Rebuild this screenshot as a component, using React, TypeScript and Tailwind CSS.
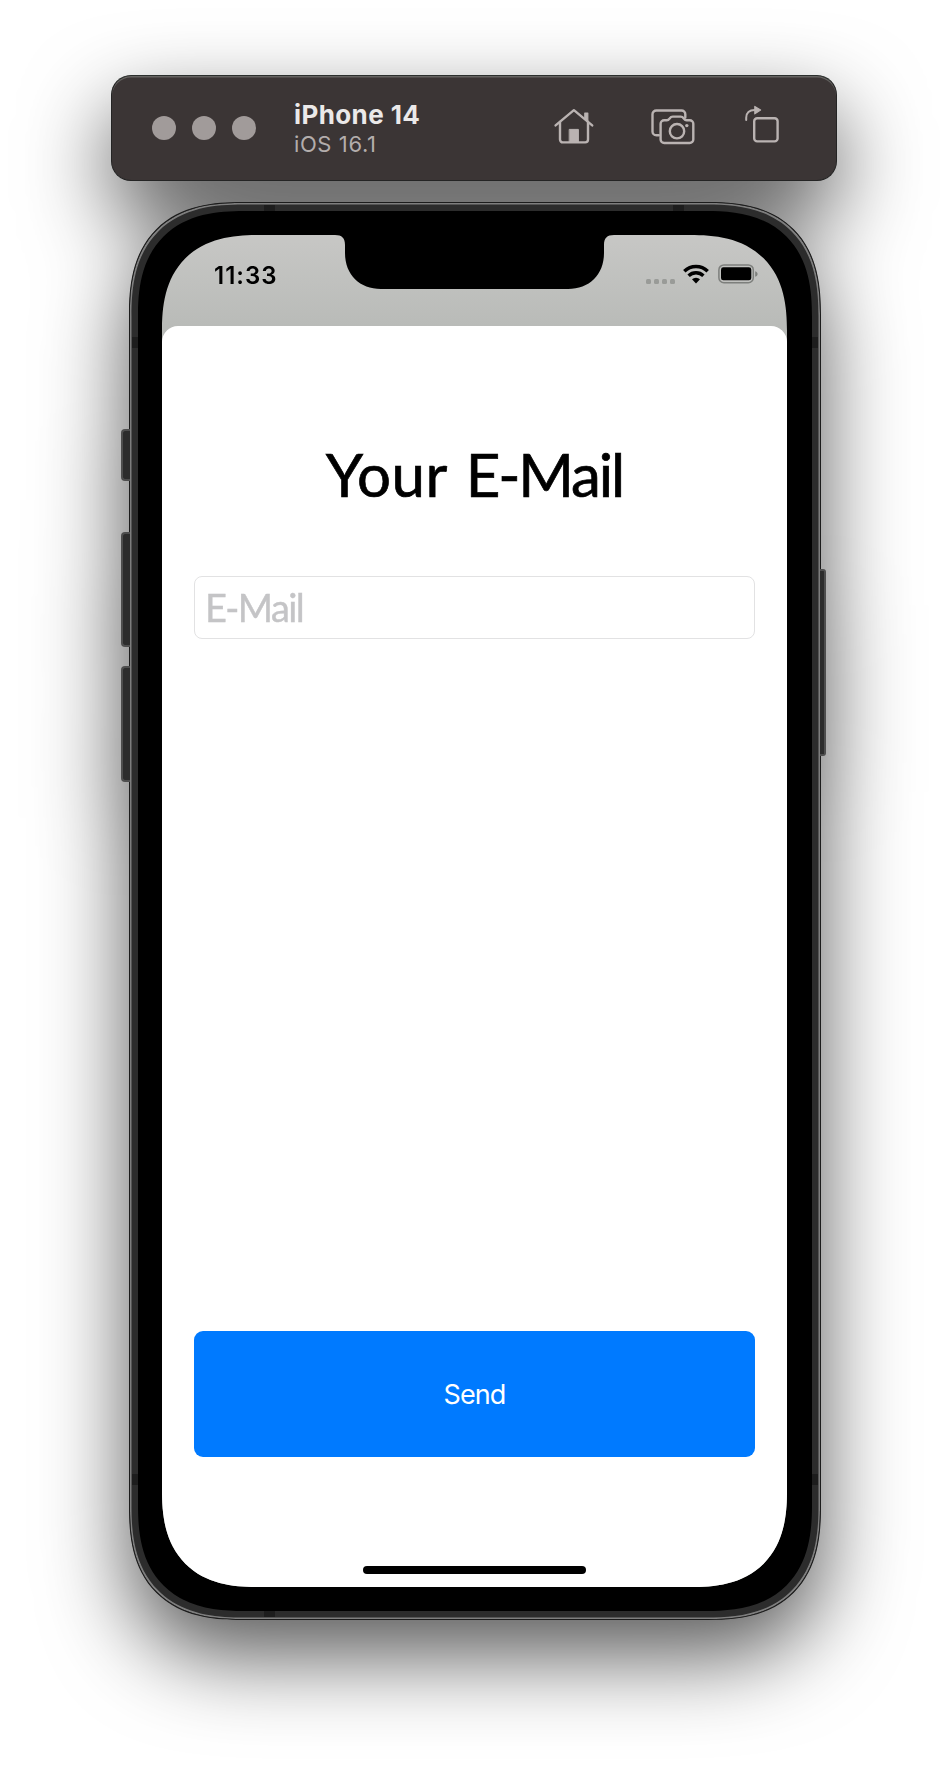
function HomeIcon() {
  return (
    <svg className="h-[36px] w-[40px]" viewBox="0 0 40 36" fill="none" stroke="#bab3b2" strokeWidth="2.400" strokeLinecap="round" strokeLinejoin="round">
      <path d="M1.600 17.400 19.900 2.200 38.200 17.400" />
      <path d="M6 14v17.600a2.800 2.800 0 0 0 2.800 2.800h22.400a2.800 2.800 0 0 0 2.800-2.800V14" />
      <path d="M30.800 5h3v8.600l-3-2.500z" fill="#bab3b2" strokeWidth="1.200" />
      <path d="M15.600 21.400h8.800V34h-8.800z" fill="#bab3b2" strokeWidth="1" />
    </svg>
  );
}

function CameraIcon() {
  return (
    <svg className="h-[36px] w-[44px]" viewBox="0 0 44 36" fill="none" stroke="#bab3b2" strokeWidth="2.400" strokeLinecap="round" strokeLinejoin="round">
      <path d="M7.800 26.200H5.300a3.800 3.800 0 0 1-3.800-3.800V5.300a3.800 3.800 0 0 1 3.800-3.800h25.200a3.800 3.800 0 0 1 3.800 3.800v3.200" />
      <path d="M13.200 11.200h2.600c1.500 0 2-.6 2.800-1.700.9-1.300 1.800-1.900 3.200-1.900h7.800c1.400 0 2.300.6 3.200 1.900.8 1.100 1.300 1.700 2.800 1.700h3.100a3.600 3.600 0 0 1 3.600 3.600v15.600a3.600 3.600 0 0 1-3.600 3.600H13.200a3.600 3.600 0 0 1-3.600-3.600V14.800a3.600 3.600 0 0 1 3.600-3.600z" />
      <circle cx="26" cy="22.200" r="7.200" />
      <circle cx="35.800" cy="16.600" r="1.700" fill="#bab3b2" stroke="none" />
    </svg>
  );
}

function RotateIcon() {
  return (
    <svg className="h-[38px] w-[34px]" viewBox="0 0 34 38" fill="none" stroke="#bab3b2" strokeWidth="2.400" strokeLinecap="round" strokeLinejoin="round">
      <rect x="9.200" y="13.200" width="23.400" height="23.200" rx="3" />
      <path d="M1.200 15v-2.200c0-4.800 3.200-7.800 8.400-7.800" strokeWidth="2" />
      <path d="M9.800 1.400 15.600 5 9.800 8.800z" fill="#bab3b2" strokeWidth="1.200" />
    </svg>
  );
}

function Toolbar() {
  return (
    <header className="ml-[111px] flex h-[106px] w-[726px] items-center rounded-[20px] border border-[#242424] border-t-[#2b2f2d] bg-[#3b3535] pl-[40px] shadow-[inset_0_1.5px_0_#656361]">
      <div className="flex gap-4">
        <span className="size-6 rounded-full bg-[#a19b9a]" />
        <span className="size-6 rounded-full bg-[#a19b9a]" />
        <span className="size-6 rounded-full bg-[#a19b9a]" />
      </div>
      <div className="mt-[2px] ml-[38px] w-[260px]">
        <div className="text-[26px] leading-[30px] font-bold tracking-[0.4px] text-[#ebe9e9]">iPhone 14</div>
        <div className="text-[22px] leading-[28px] tracking-[0.6px] text-[#b3adac]">iOS 16.1</div>
      </div>
      <div className="mb-[4px] flex items-center">
        <HomeIcon />
        <div className="mt-[2px] ml-[57px]"><CameraIcon /></div>
        <div className="mb-[5px] ml-[50px]"><RotateIcon /></div>
      </div>
    </header>
  );
}

function StatusBar() {
  return (
    <div className="relative flex h-[91px] justify-between">
      <svg className="absolute top-0 left-[173px] h-[54px] w-[279px]" viewBox="0 0 279 54">
        <path d="M0 0C7 0 10 3 10 10V18C10 40 25 54 46 54H233C254 54 269 40 269 18V10C269 3 272 0 279 0Z" fill="#000" />
      </svg>
      <span className="mt-[26px] ml-[52px] text-[24px] leading-[30px] font-semibold tracking-[1px] text-black">11:33</span>
      <div className="mt-[27.500px] mr-[29.500px] flex">
        <div className="mt-[16px] mr-[8px] flex gap-[2.700px]">
          <i className="size-[5px] rounded-[1.500px] bg-[#999b98]" />
          <i className="size-[5px] rounded-[1.500px] bg-[#999b98]" />
          <i className="size-[5px] rounded-[1.500px] bg-[#999b98]" />
          <i className="size-[5px] rounded-[1.500px] bg-[#999b98]" />
        </div>
        <svg className="mt-px h-[20px] w-[26px]" viewBox="0 0 26 20" fill="none" stroke="#000" strokeWidth="3.400">
          <path d="M1.300 7.300a16.700 16.700 0 0 1 23.400 0" />
          <path d="M5.600 11.800a10.600 10.600 0 0 1 14.800 0" />
          <path d="M13 19.500 9 15.300a5.800 5.800 0 0 1 8 0z" fill="#000" stroke="none" />
        </svg>
        <svg className="mt-[1.500px] ml-[9px] h-[20px] w-[40px]" viewBox="0 0 40 20">
          <rect x="0.900" y="0.900" width="34.400" height="17.800" rx="5" fill="none" stroke="#7d7f7c" strokeWidth="1.500" />
          <rect x="3" y="3.300" width="30.300" height="13" rx="2.400" fill="#000" />
          <path d="M37.200 7.200c3.200 1 3.200 4.600 0 5.600z" fill="#7d7f7c" />
        </svg>
      </div>
    </div>
  );
}

function EmailSheet() {
  return (
    <main className="flex h-[1261px] flex-col items-center rounded-t-[16px] bg-white">
      <h1 className="mt-[110px] flex h-[77px] gap-[18px] font-['Lato',sans-serif] text-[60px] leading-[76px] whitespace-nowrap text-black [-webkit-text-stroke:0.7px_#000]">
        <span className="tracking-[0.4px]">Your</span>{" "}
        <span className="tracking-[-2.1px]">E-Mail</span>
      </h1>
      <input
        className="mt-[63px] h-[63px] w-[561px] rounded-[8px] border border-[#e2e2e3] bg-white px-[10px] pb-[2px] font-['Lato',sans-serif] text-[38px] tracking-[-1.6px] text-black outline-none placeholder:text-[#c4c4c6] placeholder:opacity-100 placeholder:[-webkit-text-stroke:0.4px_#c4c4c6]"
        type="email"
        placeholder="E-Mail"
      />
      <button className="mt-[692px] h-[126px] w-[561px] rounded-[9px] bg-[#007aff] pt-[2px] text-[27px] tracking-[-0.9px] text-white">Send</button>
      <div className="mt-[109px] h-[8px] w-[223px] rounded-full bg-black" />
    </main>
  );
}

function Phone() {
  return (
    <section className="relative mt-[21px] ml-[129px] h-[1418px] w-[692px] rounded-[110px] border border-[#1c1c1c] bg-[#2c2c2c] shadow-[inset_0_0_0_1.5px_#7e7e7e] supports-[corner-shape:squircle]:rounded-[113px] supports-[corner-shape:squircle]:[corner-shape:superellipse(1.33)]">
      <i className="absolute top-[226px] left-[-9px] h-[52px] w-[9px] rounded-l-[4px] border-2 border-r-0 border-[#4e4e4e] bg-[#2c2c2c]" />
      <i className="absolute top-[329px] left-[-9px] h-[115px] w-[9px] rounded-l-[4px] border-2 border-r-0 border-[#4e4e4e] bg-[#2c2c2c]" />
      <i className="absolute top-[463px] left-[-9px] h-[116px] w-[9px] rounded-l-[4px] border-2 border-r-0 border-[#4e4e4e] bg-[#2c2c2c]" />
      <i className="absolute top-[366px] left-[690px] h-[187px] w-[6px] rounded-r-[3px] border-2 border-l-0 border-[#4e4e4e] bg-[#2c2c2c]" />
      <i className="absolute top-[2px] left-[134px] h-[7px] w-[11px] bg-[#1d1d1d]" />
      <i className="absolute top-[2px] left-[543px] h-[7px] w-[11px] bg-[#1d1d1d]" />
      <i className="absolute bottom-[2px] left-[134px] h-[7px] w-[11px] bg-[#1d1d1d]" />
      <i className="absolute top-[134px] left-[2px] h-[11px] w-[7px] bg-[#1d1d1d]" />
      <i className="absolute top-[134px] right-[2px] h-[11px] w-[7px] bg-[#1d1d1d]" />
      <i className="absolute bottom-[134px] left-[2px] h-[11px] w-[7px] bg-[#1d1d1d]" />
      <i className="absolute right-[2px] bottom-[134px] h-[11px] w-[7px] bg-[#1d1d1d]" />
      <div className="relative mt-[8px] ml-[8px] h-[1400px] w-[674px] rounded-[102px] bg-black pt-[24px] pl-[24px] supports-[corner-shape:squircle]:rounded-[106px] supports-[corner-shape:squircle]:[corner-shape:superellipse(1.33)]">
        <div className="h-[1352px] w-[625px] overflow-hidden rounded-[86px] bg-[linear-gradient(#c7c7c5,#b9bbb8_91px)] supports-[corner-shape:squircle]:rounded-[97px] supports-[corner-shape:squircle]:[corner-shape:superellipse(1.33)]">
          <StatusBar />
          <EmailSheet />
        </div>
      </div>
    </section>
  );
}

export default function App() {
  return (
    <div className="h-[1770px] w-[948px] overflow-hidden bg-white pt-[75px] font-['Inter',sans-serif]">
      <div className="drop-shadow-[0_36px_43px_rgba(0,0,0,0.65)]">
        <Toolbar />
        <Phone />
      </div>
    </div>
  );
}
